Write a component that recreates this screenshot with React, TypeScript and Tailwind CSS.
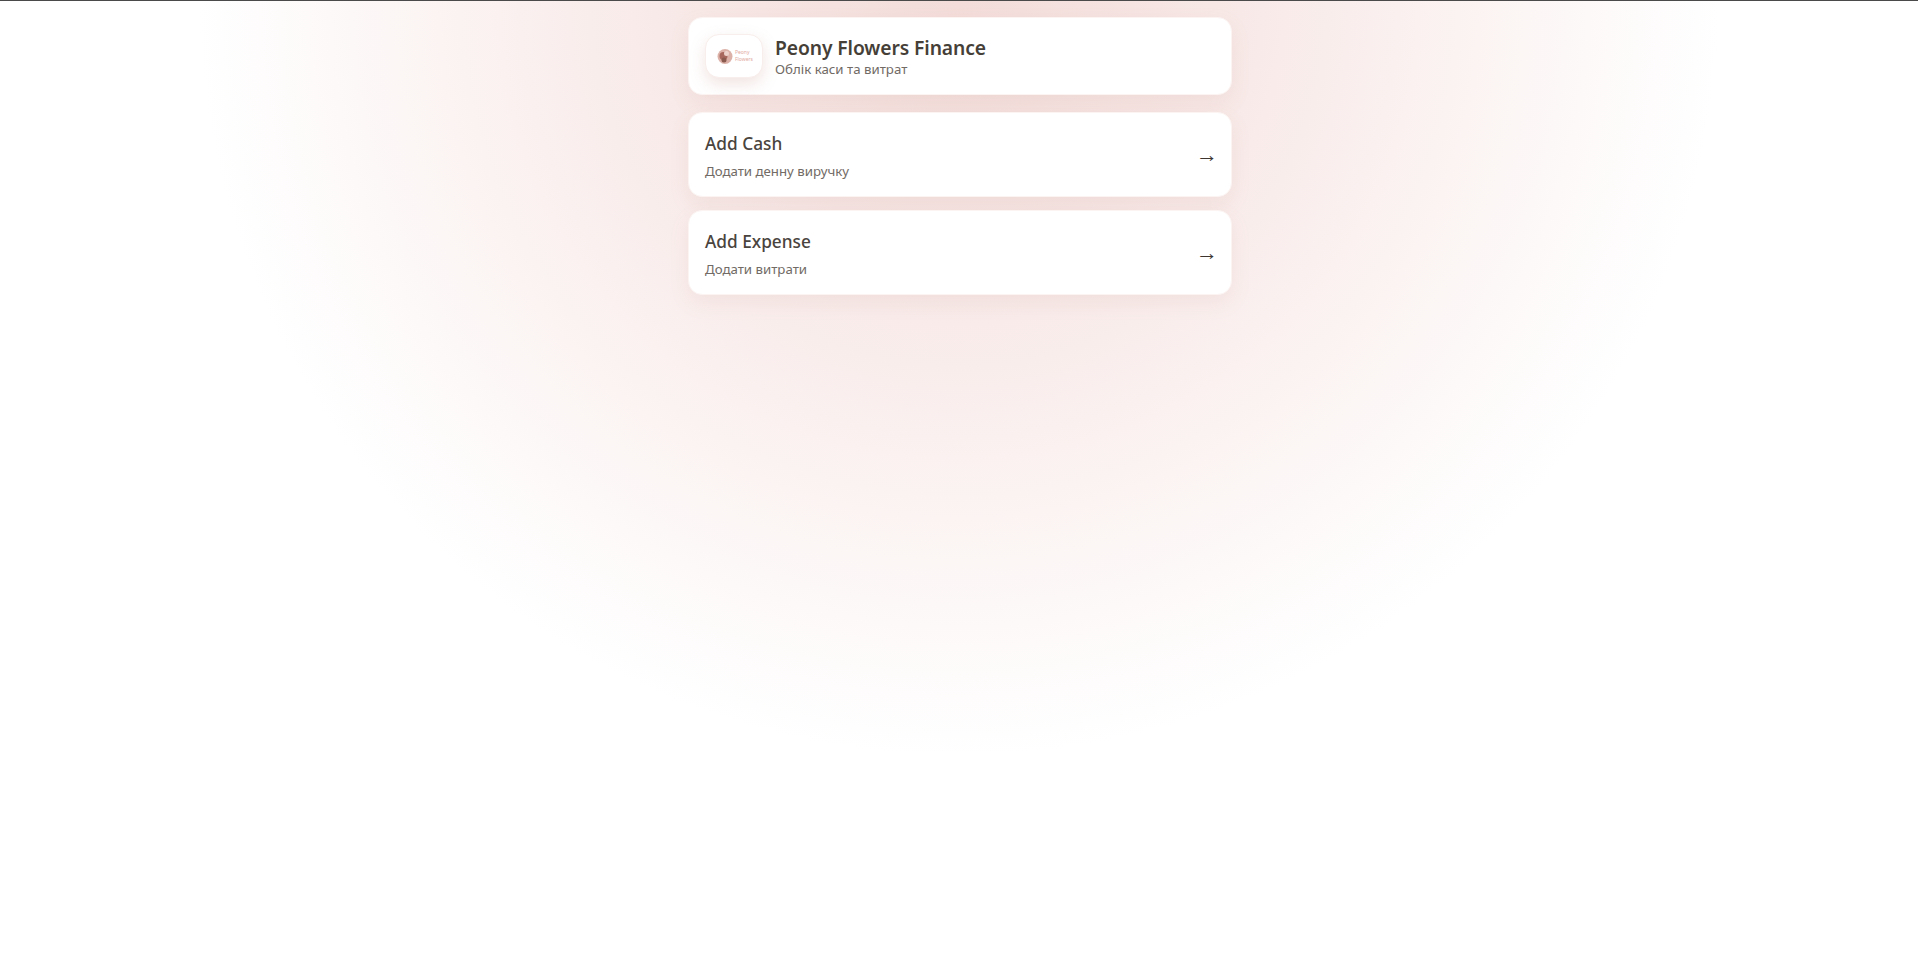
import React from 'react'

type ActionType = {
    title: string,
    subtitle: string,
}

const actions: ActionType[] = [
    { title: 'Add Cash', subtitle: 'Додати денну виручку' },
    { title: 'Add Expense', subtitle: 'Додати витрати' },
]

const Logo = () => (
    <div className="flex h-[44px] w-[58px] shrink-0 items-center justify-center gap-[2px] rounded-[14px] border border-[#f8eeeb] bg-white pl-[2px] shadow-[0_6px_16px_rgba(190,130,120,0.22)]">
        <svg width="16" height="17" viewBox="0 0 16 17">
            <circle cx="8" cy="8.5" r="7.5" fill="#dcb2a8" />
            <circle cx="6.5" cy="8" r="4" fill="#a8675c" />
            <circle cx="9.5" cy="5.5" r="2.5" fill="#ecd2cb" />
            <circle cx="7" cy="12" r="2.5" fill="#8a5a4e" />
        </svg>
        <div className="flex flex-col text-[5px] leading-[7px] text-[#dfa9a0]">
            <span>Peony</span>
            <span>Flowers</span>
        </div>
    </div>
)

const ActionCard = ({ title, subtitle }: ActionType) => (
    <a className="flex h-[85px] items-center justify-between rounded-[14px] border border-[#fbf4f2] bg-white pl-[16px] pr-[13px] shadow-[0_8px_20px_rgba(190,130,120,0.1)]">
        <div className="flex flex-col pt-[3px]">
            <span className="text-[17.25px] font-medium leading-[24px] text-[#4a443e]">{title}</span>
            <span className="mt-[5px] text-[13.25px] leading-[20px] text-[#716a65]">{subtitle}</span>
        </div>
        <span className="-mt-[4px] text-[22px] leading-none text-[#3d3530]">→</span>
    </a>
)

export default function App() {
    return (
        <div className="min-h-[954px] border-t border-[#4a4a4a] bg-[radial-gradient(ellipse_at_top,#f3dcd9_0%,#ffffff_56%)] pl-[2px] font-['Noto_Sans','Open_Sans',sans-serif]">
            <main className="mx-auto flex w-[544px] flex-col pt-[16px]">
                <header className="mb-[17px] flex h-[78px] items-center gap-[12px] rounded-[14px] border border-[#fbf4f2] bg-white pl-[16px] shadow-[0_8px_20px_rgba(190,130,120,0.1)]">
                    <Logo />
                    <div className="flex flex-col pt-[2px]">
                        <h1 className="text-[19.3px] font-semibold leading-[24px] tracking-[-0.1px] text-[#453f38]">Peony Flowers Finance</h1>
                        <p className="text-[13.25px] leading-[18px] text-[#716a65]">Облік каси та витрат</p>
                    </div>
                </header>
                <div className="flex flex-col gap-[13px]">
                    {actions.map((item) => (
                        <ActionCard key={item.title} {...item} />
                    ))}
                </div>
            </main>
        </div>
    )
}
